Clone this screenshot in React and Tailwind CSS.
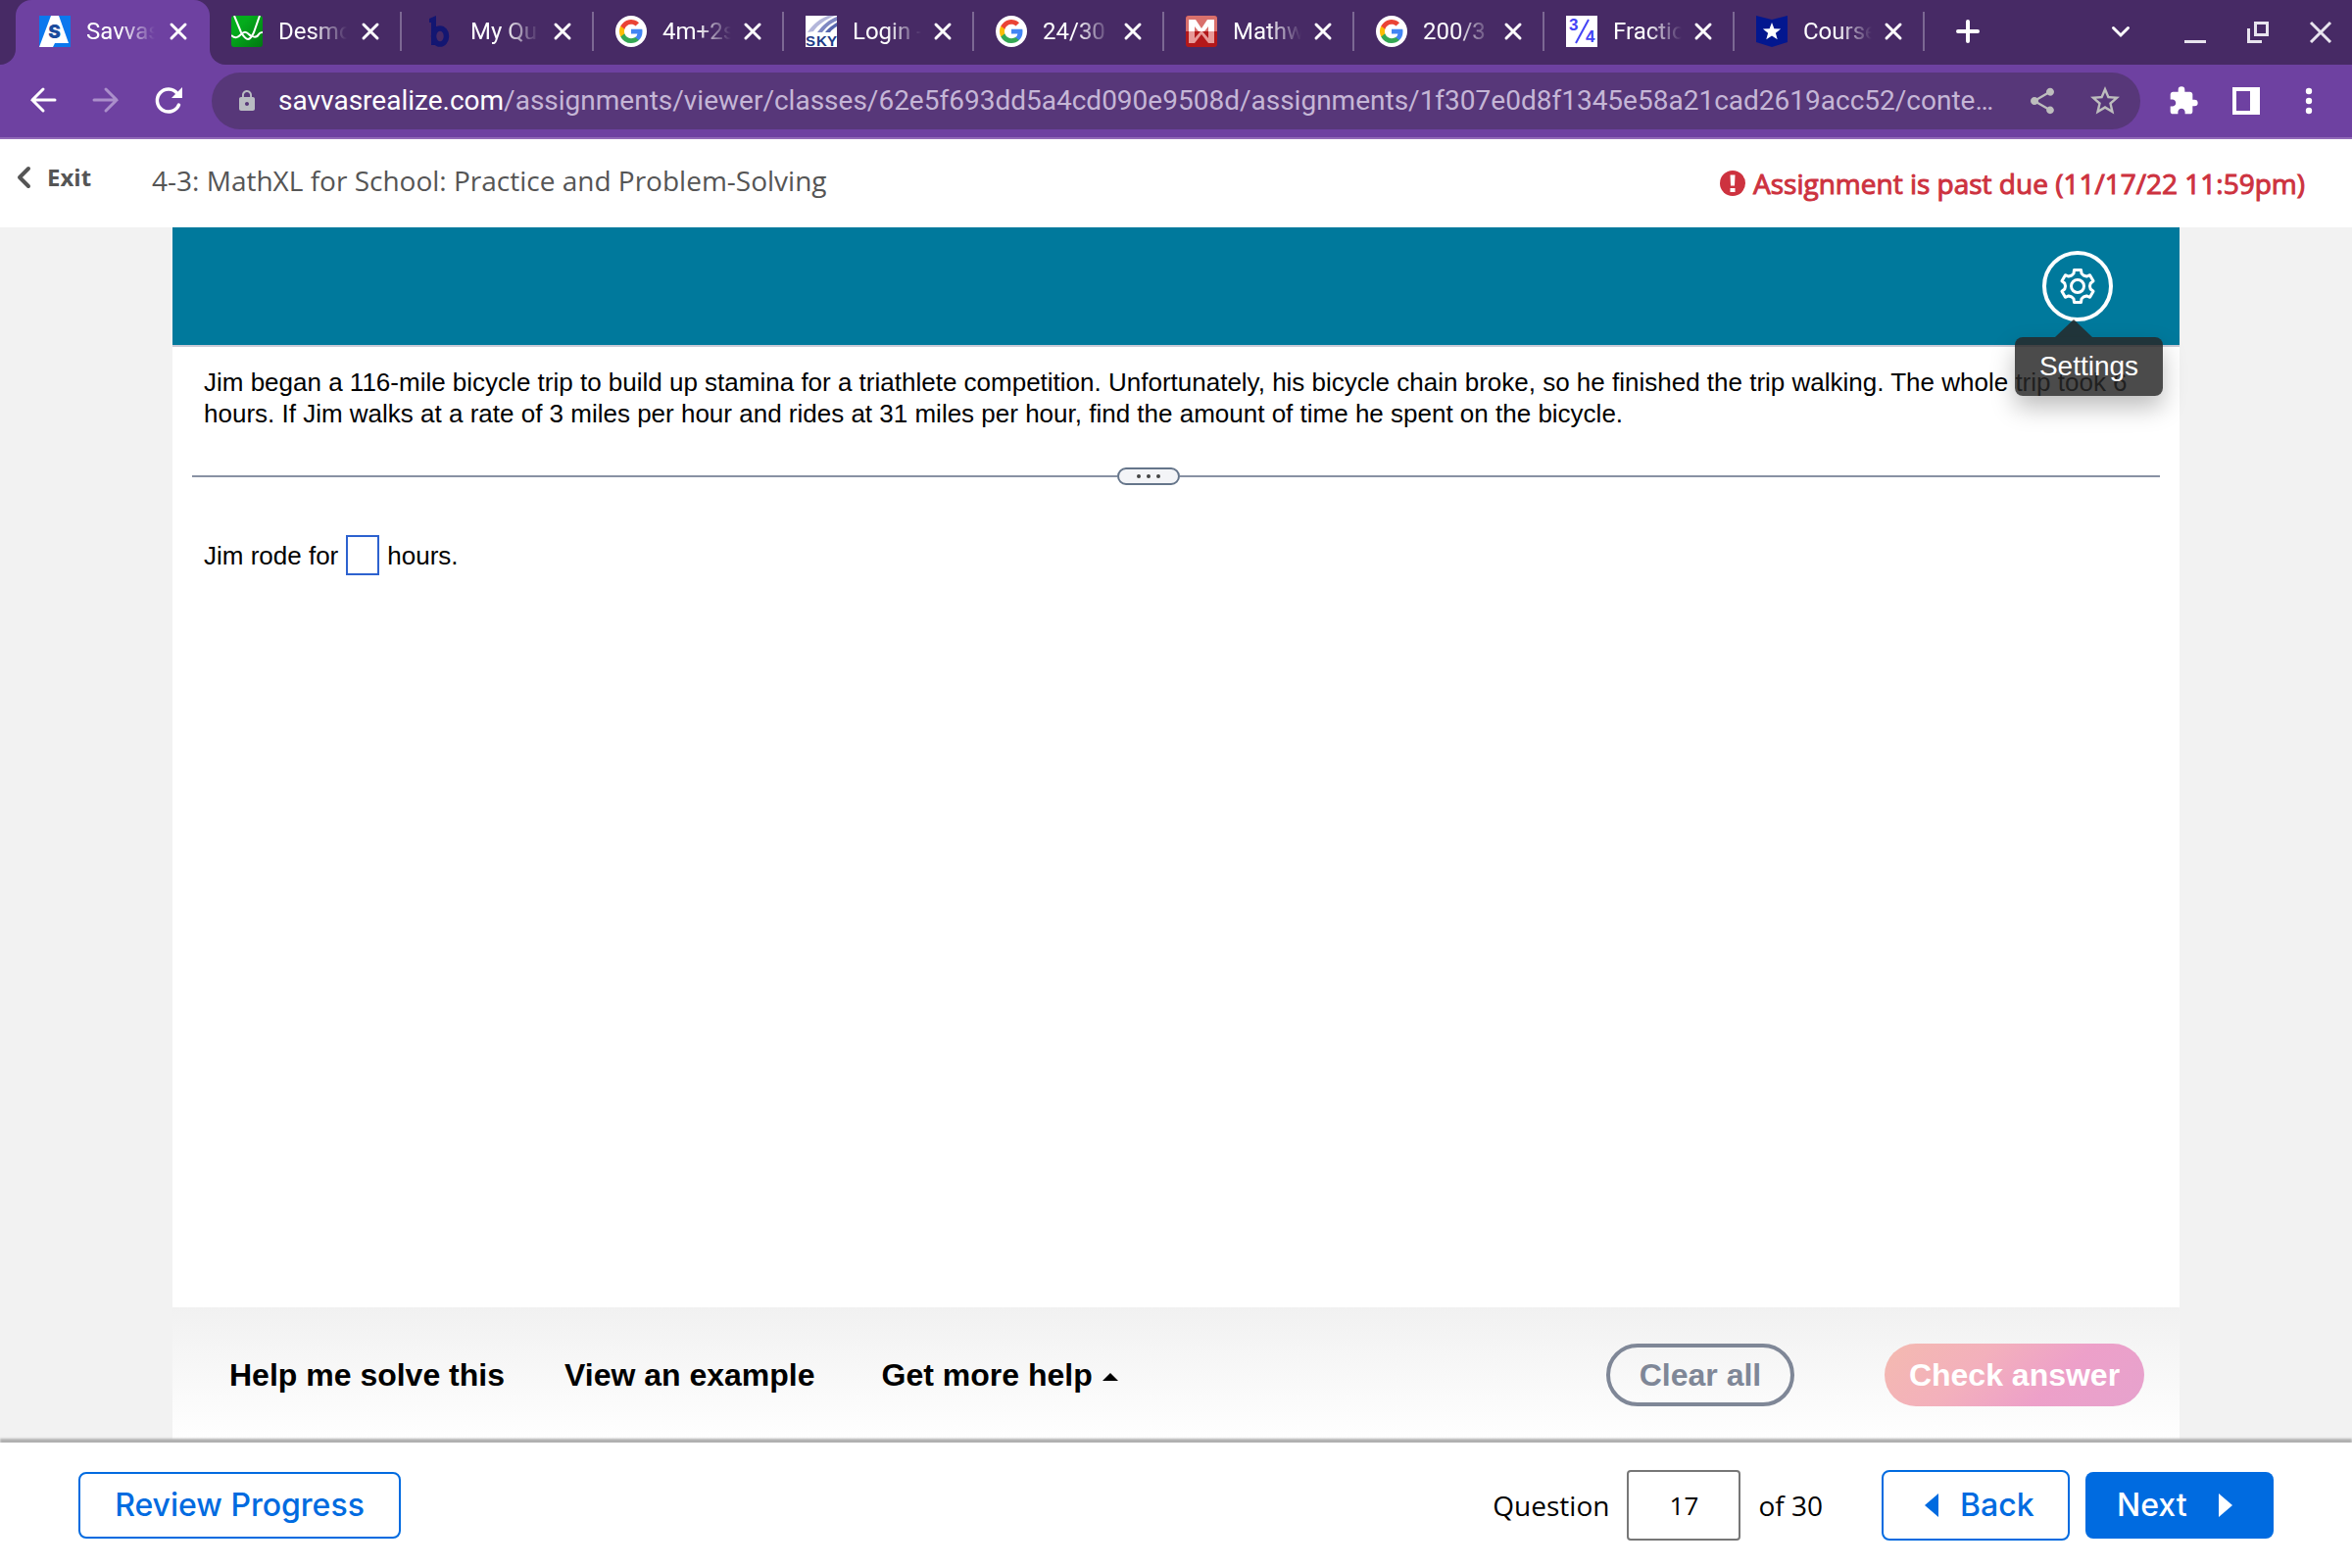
import { useState } from "react";
import { MdExtension, MdLock, MdShare, MdStarBorder } from "react-icons/md";

function SavvasIcon() {
  return (
    <svg viewBox="0 0 32 32" className="size-8 shrink-0">
      <rect width="32" height="32" fill="#0b78ee" />
      <path d="M12 0h8l10 28H16l-2 4H0z" fill="#fff" />
      <text x="15.5" y="23" textAnchor="middle" fontSize="19" fontWeight="900" fontFamily="Inter, sans-serif" fill="#1c4b9c">S</text>
    </svg>
  );
}

function DesmosIcon() {
  return (
    <svg viewBox="0 0 32 32" className="size-8 shrink-0">
      <defs>
        <linearGradient id="desmos" x1="0" y1="0" x2="1" y2="1">
          <stop offset="0.3" stopColor="#04ac1c" />
          <stop offset="1" stopColor="#017712" />
        </linearGradient>
      </defs>
      <rect width="32" height="32" rx="3" fill="url(#desmos)" />
      <g fill="none" stroke="#fff" strokeWidth="2">
        <path d="M3 0l7 17c3 5 5 7 7 7 3 0 4-3 6-7l6-17" />
        <path d="M0 20c4 4 7 2 10-1s5-3 8 0 8 4 10 0c1-2 2-2 4-2" />
      </g>
    </svg>
  );
}

function BigIdeasIcon() {
  return (
    <svg viewBox="0 0 32 32" className="size-8 shrink-0">
      <path d="M6 3l7-3v30H8V7H6z" fill="#131672" />
      <ellipse cx="17" cy="21" rx="6.5" ry="8" fill="none" stroke="#131672" strokeWidth="5.5" />
    </svg>
  );
}

function GoogleIcon() {
  return (
    <svg viewBox="0 0 32 32" className="size-8 shrink-0">
      <circle cx="16" cy="16" r="16" fill="#fff" />
      <g transform="translate(4 4)">
        <path fill="#4285f4" d="M23.5 12.27c0-.85-.08-1.67-.22-2.45H12v4.64h6.45a5.5 5.5 0 0 1-2.39 3.62v3.01h3.87c2.26-2.09 3.57-5.16 3.57-8.82z" />
        <path fill="#34a853" d="M12 24c3.24 0 5.95-1.07 7.93-2.91l-3.87-3.01c-1.07.72-2.45 1.15-4.06 1.15-3.12 0-5.77-2.11-6.71-4.95H1.29v3.11A12 12 0 0 0 12 24z" />
        <path fill="#fbbc05" d="M5.29 14.28a7.2 7.2 0 0 1 0-4.56V6.61h-4a12 12 0 0 0 0 10.78z" />
        <path fill="#ea4335" d="M12 4.77c1.76 0 3.34.6 4.59 1.79l3.43-3.43A12 12 0 0 0 1.29 6.61l4 3.11C6.23 6.88 8.88 4.77 12 4.77z" />
      </g>
    </svg>
  );
}

function SkywardIcon() {
  return (
    <svg viewBox="0 0 32 32" className="size-8 shrink-0">
      <rect width="32" height="32" fill="#fff" />
      <path d="M2 17C8 8 15 3 23 0h7C20 4 13 9 8 16z" fill="#b3b6da" />
      <path d="M12 17C18 9 24 4 32 1v4c-7 3-11 7-15 12z" fill="#7f88c2" />
      <path d="M20 17c4-5 7-7 12-10v4c-3 2-5 3-7 6z" fill="#5565ad" />
      <g fontSize="15" fontWeight="700" fontFamily="Liberation Sans, sans-serif" fill="#1d3a86">
        <text x="0" y="31">S</text>
        <text x="11" y="31">K</text>
        <text x="22" y="31">Y</text>
      </g>
    </svg>
  );
}

function MathwayIcon() {
  return (
    <svg viewBox="0 0 32 32" className="size-8 shrink-0">
      <rect width="32" height="32" rx="3" fill="#b3181a" />
      <path d="M3 0h26a3 3 0 0 1 3 3v13H0V3a3 3 0 0 1 3-3z" fill="#d9706c" />
      <path d="M3 16V4h7l6 9 6-9h7v12h-6v-5l-4 5h-6l-4-5v5z" fill="#fff" />
      <path d="M3 16h6v7l6-7h2l6 7v-7h6v12h-6l-7-9-7 9H3z" fill="#e79a98" />
    </svg>
  );
}

function FractionIcon() {
  return (
    <svg viewBox="0 0 32 32" className="size-8 shrink-0">
      <rect width="32" height="32" fill="#fff" />
      <path d="M23 4 10 28" stroke="#4343f5" strokeWidth="2" />
      <g fontSize="17" fontWeight="700" fontFamily="Liberation Sans, sans-serif" fill="#4343f5">
        <text x="3" y="15">3</text>
        <text x="20" y="27">4</text>
      </g>
    </svg>
  );
}

function CourseIcon() {
  return (
    <svg viewBox="0 0 32 32" className="size-8 shrink-0">
      <path d="M0 0l16 4L32 0v27l-16 5L0 27z" fill="#03178f" />
      <path d="M16 7l2.4 6.3 6.7.3-5.2 4.2 1.8 6.5-5.7-3.7-5.7 3.7 1.8-6.5-5.2-4.2 6.7-.3z" fill="#fff" />
    </svg>
  );
}

function CloseIcon() {
  return (
    <svg viewBox="0 0 24 24" className="size-6" stroke="#fff" strokeWidth="3" strokeLinecap="round">
      <path d="M5 5l14 14M19 5 5 19" />
    </svg>
  );
}

// Six-toothed outline around (18, 18)
const gearPoints = [0, 60, 120, 180, 240, 300].flatMap((deg) => {
  const a = ((deg - 90) * Math.PI) / 180;
  return [[11, -6], [13, -4], [16.5, -3.5], [16.5, 3.5], [13, 4], [11, 6]].map(([r, t]) => {
    const x = 18 + r * Math.cos(a) - t * Math.sin(a);
    const y = 18 + r * Math.sin(a) + t * Math.cos(a);
    return `${x.toFixed(2)},${y.toFixed(2)}`;
  });
});

function GearIcon() {
  return (
    <svg viewBox="0 0 36 36" className="size-9" fill="none" stroke="#fff" strokeWidth="3" strokeLinejoin="round">
      <polygon points={gearPoints.join(" ")} />
      <circle cx="18" cy="18" r="6.5" />
    </svg>
  );
}

const tabs = [
  { title: "Desmos", Icon: DesmosIcon },
  { title: "My Quizzes", Icon: BigIdeasIcon },
  { title: "4m+2s", Icon: GoogleIcon },
  { title: "Login -", Icon: SkywardIcon },
  { title: "24/30", Icon: GoogleIcon },
  { title: "Mathway", Icon: MathwayIcon },
  { title: "200/3", Icon: GoogleIcon },
  { title: "Fractio", Icon: FractionIcon },
  { title: "Course", Icon: CourseIcon },
];

function TabBody({ title, Icon }) {
  return (
    <>
      <Icon />
      <span className="ml-4 w-[70px] overflow-hidden whitespace-nowrap text-2xl text-white [mask-image:linear-gradient(to_right,#000_50%,transparent)]">
        {title}
      </span>
      <button aria-label={`Close ${title}`} className="ml-auto">
        <CloseIcon />
      </button>
    </>
  );
}

function TabStrip() {
  return (
    <div className="flex h-[66px]">
      <div className="w-4 rounded-br-2xl bg-[#472a65]" />
      <div className="w-[198px] bg-[#472a65]">
        <div className="flex h-full items-center rounded-t-2xl bg-[#6e41a1] pb-0.5 pl-6 pr-5">
          <TabBody title="Savvas" Icon={SavvasIcon} />
        </div>
      </div>
      <div className="flex min-w-0 flex-1 items-center rounded-bl-2xl bg-[#472a65] pb-0.5">
        {tabs.map((tab, i) => (
          <div
            key={i}
            className={`flex h-10 shrink-0 items-center border-r-2 border-[#7c6893] pl-[22px] pr-[18px] ${
              i < 2 ? "w-[196px]" : "w-[194px]"
            }`}
          >
            <TabBody title={tab.title} Icon={tab.Icon} />
          </div>
        ))}
        <button aria-label="New tab" className="ml-8">
          <svg viewBox="0 0 24 24" className="size-6" stroke="#fff" strokeWidth="4" strokeLinecap="round">
            <path d="M12 2v20M2 12h20" />
          </svg>
        </button>
        <div className="ml-auto flex items-center gap-10 pr-5">
          <button aria-label="Search tabs" className="mr-3">
            <svg viewBox="0 0 24 24" className="size-6" fill="none" stroke="#fff" strokeWidth="3" strokeLinecap="round">
              <path d="M4.5 8.500 12 16l7.5-7.5" />
            </svg>
          </button>
          <button aria-label="Minimize">
            <svg viewBox="0 0 24 24" className="size-6" fill="#e8e4ee">
              <path d="M1 21h22v3H1z" />
            </svg>
          </button>
          <button aria-label="Restore">
            <svg viewBox="0 0 24 24" className="size-6" fill="none" stroke="#e8e4ee" strokeWidth="3">
              <path d="M9.5 3.500h12v12h-12zM2.500 9v13.500H16" />
            </svg>
          </button>
          <button aria-label="Close window">
            <svg viewBox="0 0 24 24" className="size-6" stroke="#e8e4ee" strokeWidth="3">
              <path d="M2 3l20 20M22 3 2 23" />
            </svg>
          </button>
        </div>
      </div>
    </div>
  );
}

function Toolbar() {
  return (
    <div className="flex h-[76px] items-center border-b-2 border-[#9169b7] px-7">
      <div className="flex gap-8">
        <button aria-label="Back">
          <svg viewBox="0 0 32 32" className="size-8" fill="none" stroke="#fff" strokeWidth="3" strokeLinecap="round">
            <path d="M28 15H5M16 4 5 15l11 11" />
          </svg>
        </button>
        <button aria-label="Forward">
          <svg viewBox="0 0 32 32" className="size-8" fill="none" stroke="#ab8fcb" strokeWidth="3" strokeLinecap="round">
            <path d="M4 15h23M16 4l11 11-11 11" />
          </svg>
        </button>
        <button aria-label="Reload">
          <svg viewBox="0 0 32 32" className="size-8" fill="none">
            <path d="M26.5 20A11.5 11.5 0 1 1 25 8.500" stroke="#fff" strokeWidth="3.5" strokeLinecap="round" />
            <path d="M30 2v11H19z" fill="#fff" />
          </svg>
        </button>
      </div>
      <div className="ml-7 flex h-[58px] min-w-0 flex-1 items-center rounded-full bg-[#573779] pl-6 pr-[18px]">
        <MdLock className="size-6 shrink-0 text-[#b9bcc2]" />
        <p className="ml-5 min-w-0 flex-1 truncate text-[28px] leading-9 text-[#c5b6d6]">
          <span className="text-white">savvasrealize.com</span>
          /assignments/viewer/classes/62e5f693dd5a4cd090e9508d/assignments/1f307e0d8f1345e58a21cad2619acc52/content/
        </p>
        <button aria-label="Share" className="ml-6 text-[#bdbdbd]">
          <MdShare className="size-8" />
        </button>
        <button aria-label="Bookmark" className="ml-[30px] text-[#bdbdbd]">
          <MdStarBorder className="size-9" />
        </button>
      </div>
      <div className="ml-7 flex items-center gap-8">
        <button aria-label="Extensions" className="text-white">
          <MdExtension className="size-8" />
        </button>
        <button aria-label="Side panel">
          <svg viewBox="0 0 32 32" className="size-8" fill="#fff">
            <path fillRule="evenodd" d="M2 2h28v28H2zM6 6v20h14V6z" />
          </svg>
        </button>
        <button aria-label="Menu">
          <svg viewBox="0 0 32 32" className="size-8" fill="#fff">
            <circle cx="16" cy="6" r="3.2" />
            <circle cx="16" cy="16" r="3.2" />
            <circle cx="16" cy="26" r="3.2" />
          </svg>
        </button>
      </div>
    </div>
  );
}

function AssignmentHeader() {
  return (
    <div className="flex h-[90px] items-center bg-white pl-4 pr-12 font-['Open_Sans',sans-serif]">
      <button className="flex items-center gap-4 pb-3 text-2xl font-bold text-[#555]">
        <svg viewBox="0 0 16 24" className="h-6 w-4" fill="none" stroke="#555" strokeWidth="4" strokeLinecap="round" strokeLinejoin="round">
          <path d="M13 3 4 12l9 9" />
        </svg>
        Exit
      </button>
      <h1 className="ml-[62px] pb-1.5 text-[28px] leading-9 text-[#555]">
        4-3: MathXL for School: Practice and Problem-Solving
      </h1>
      <p className="ml-auto flex items-center gap-2 text-[28px] leading-9 text-[#cd323f] [-webkit-text-stroke:1px_#cd323f]">
        <svg viewBox="0 0 26 26" className="size-[26px]">
          <circle cx="13" cy="13" r="13" fill="#cd323f" />
          <path d="M10.5 4.500h5l-.5 11h-4zM10.500 18h5v4h-5z" fill="#fff" />
        </svg>
        Assignment is past due (11/17/22 11:59pm)
      </p>
    </div>
  );
}

function Question() {
  const [answer, setAnswer] = useState("");

  return (
    <div className="flex-1 bg-white px-5 pt-5 text-[26px] leading-8 text-black">
      <p className="px-3">
        Jim began a 116-mile bicycle trip to build up stamina for a triathlete competition. Unfortunately, his
        bicycle chain broke, so he finished the trip walking. The whole trip took 6 hours. If Jim walks at a rate
        of 3 miles per hour and rides at 31 miles per hour, find the amount of time he spent on the bicycle.
      </p>

      {/* Draggable splitter */}
      <div className="mt-[39px] flex items-center">
        <div className="h-0.5 flex-[944] bg-[#8891a3]" />
        <button
          aria-label="Resize panels"
          className="flex h-[18px] w-16 items-center justify-center gap-1.5 rounded-full border-2 border-[#65758a] bg-[#f3f4f7]"
        >
          <span className="size-1 rounded-full bg-[#444]" />
          <span className="size-1 rounded-full bg-[#444]" />
          <span className="size-1 rounded-full bg-[#444]" />
        </button>
        <div className="h-0.5 flex-[1000] bg-[#8891a3]" />
      </div>

      <div className="mt-[51px] flex items-center px-3">
        <label htmlFor="answer">Jim rode for</label>
        <input
          id="answer"
          value={answer}
          onChange={(e) => setAnswer(e.target.value)}
          className="mx-2 h-[41px] w-[34px] border-2 border-[#2d62cf] outline-none"
        />
        <span>hours.</span>
      </div>
    </div>
  );
}

function HelpBar() {
  return (
    <div className="flex h-[138px] items-center bg-linear-to-b from-[#f1f1f1] to-white pl-[58px] pr-9 text-[32px] font-bold leading-10 text-black">
      <button>Help me solve this</button>
      <button className="ml-[61px]">View an example</button>
      <button className="ml-[68px] flex items-center gap-2.5">
        Get more help
        <svg viewBox="0 0 16 8" className="mt-1 h-2 w-4">
          <path d="M0 8l8-8 8 8z" />
        </svg>
      </button>
      <button className="ml-auto h-16 w-48 rounded-full border-4 border-[#7f8797] text-[#7f8797]">Clear all</button>
      <button className="ml-[92px] h-16 w-[265px] rounded-full bg-linear-[135deg,#f4bab0,#f3b0bc_35%,#eda0c9_65%,#e6a2cd] text-white">
        Check answer
      </button>
    </div>
  );
}

function Footer() {
  const [question, setQuestion] = useState("17");

  return (
    <footer className="relative flex h-32 items-center bg-white px-20 font-['Open_Sans',sans-serif] text-[28px] text-black shadow-[0_-4px_2px_#b0b0b0]">
      <button className="h-[68px] w-[329px] rounded-lg border-2 border-[#006be0] font-['Inter',sans-serif] text-[32px] font-medium text-[#006be0]">
        Review Progress
      </button>
      <label htmlFor="question" className="ml-auto">
        Question
      </label>
      <input
        id="question"
        value={question}
        onChange={(e) => setQuestion(e.target.value)}
        className="mx-[18px] h-[72px] w-[116px] rounded border-2 border-[#777] text-center text-[26px]"
      />
      <span>of 30</span>
      <button className="ml-[60px] flex h-[72px] w-48 items-center gap-[22px] rounded-lg border-2 border-[#006be0] pl-[42px] font-['Inter',sans-serif] text-[32px] font-medium text-[#006be0]">
        <svg viewBox="0 0 14 24" className="h-6 w-3.5" fill="#006be0">
          <path d="M14 0v24L0 12z" />
        </svg>
        Back
      </button>
      <button className="ml-4 flex h-[68px] w-48 items-center justify-between rounded-lg bg-[#006be0] pl-8 pr-[42px] font-['Inter',sans-serif] text-[32px] font-medium text-white">
        Next
        <svg viewBox="0 0 14 24" className="h-6 w-3.5" fill="#fff">
          <path d="M0 0v24l14-12z" />
        </svg>
      </button>
    </footer>
  );
}

export default function App() {
  return (
    <div className="flex min-h-screen flex-col bg-[#f2f2f2] font-['Liberation_Sans',sans-serif]">
      <header className="bg-[#6e41a1] font-['Roboto',sans-serif]">
        <TabStrip />
        <Toolbar />
      </header>
      <AssignmentHeader />
      <main className="mx-44 flex flex-1 flex-col">
        <div className="flex h-[122px] items-center justify-end border-b-2 border-[#c9cad6] bg-[#00799c] pr-17">
          <div className="relative">
            <button aria-label="Settings" className="flex size-[72px] items-center justify-center rounded-full border-4 border-white">
              <GearIcon />
            </button>
            <div role="tooltip" className="absolute -left-7 top-[70px] w-[151px]">
              <svg viewBox="0 0 38 18" className="ml-[41px] h-[18px] w-[38px]" fill="#272727" fillOpacity="0.83">
                <path d="M0 18 19 0l19 18z" />
              </svg>
              <div className="rounded-lg bg-[#272727]/83 py-3 text-center text-[28px] leading-9 text-white shadow-[0_12px_24px_rgba(0,0,0,0.25)]">
                Settings
              </div>
            </div>
          </div>
        </div>
        <Question />
        <HelpBar />
      </main>
      <Footer />
    </div>
  );
}
